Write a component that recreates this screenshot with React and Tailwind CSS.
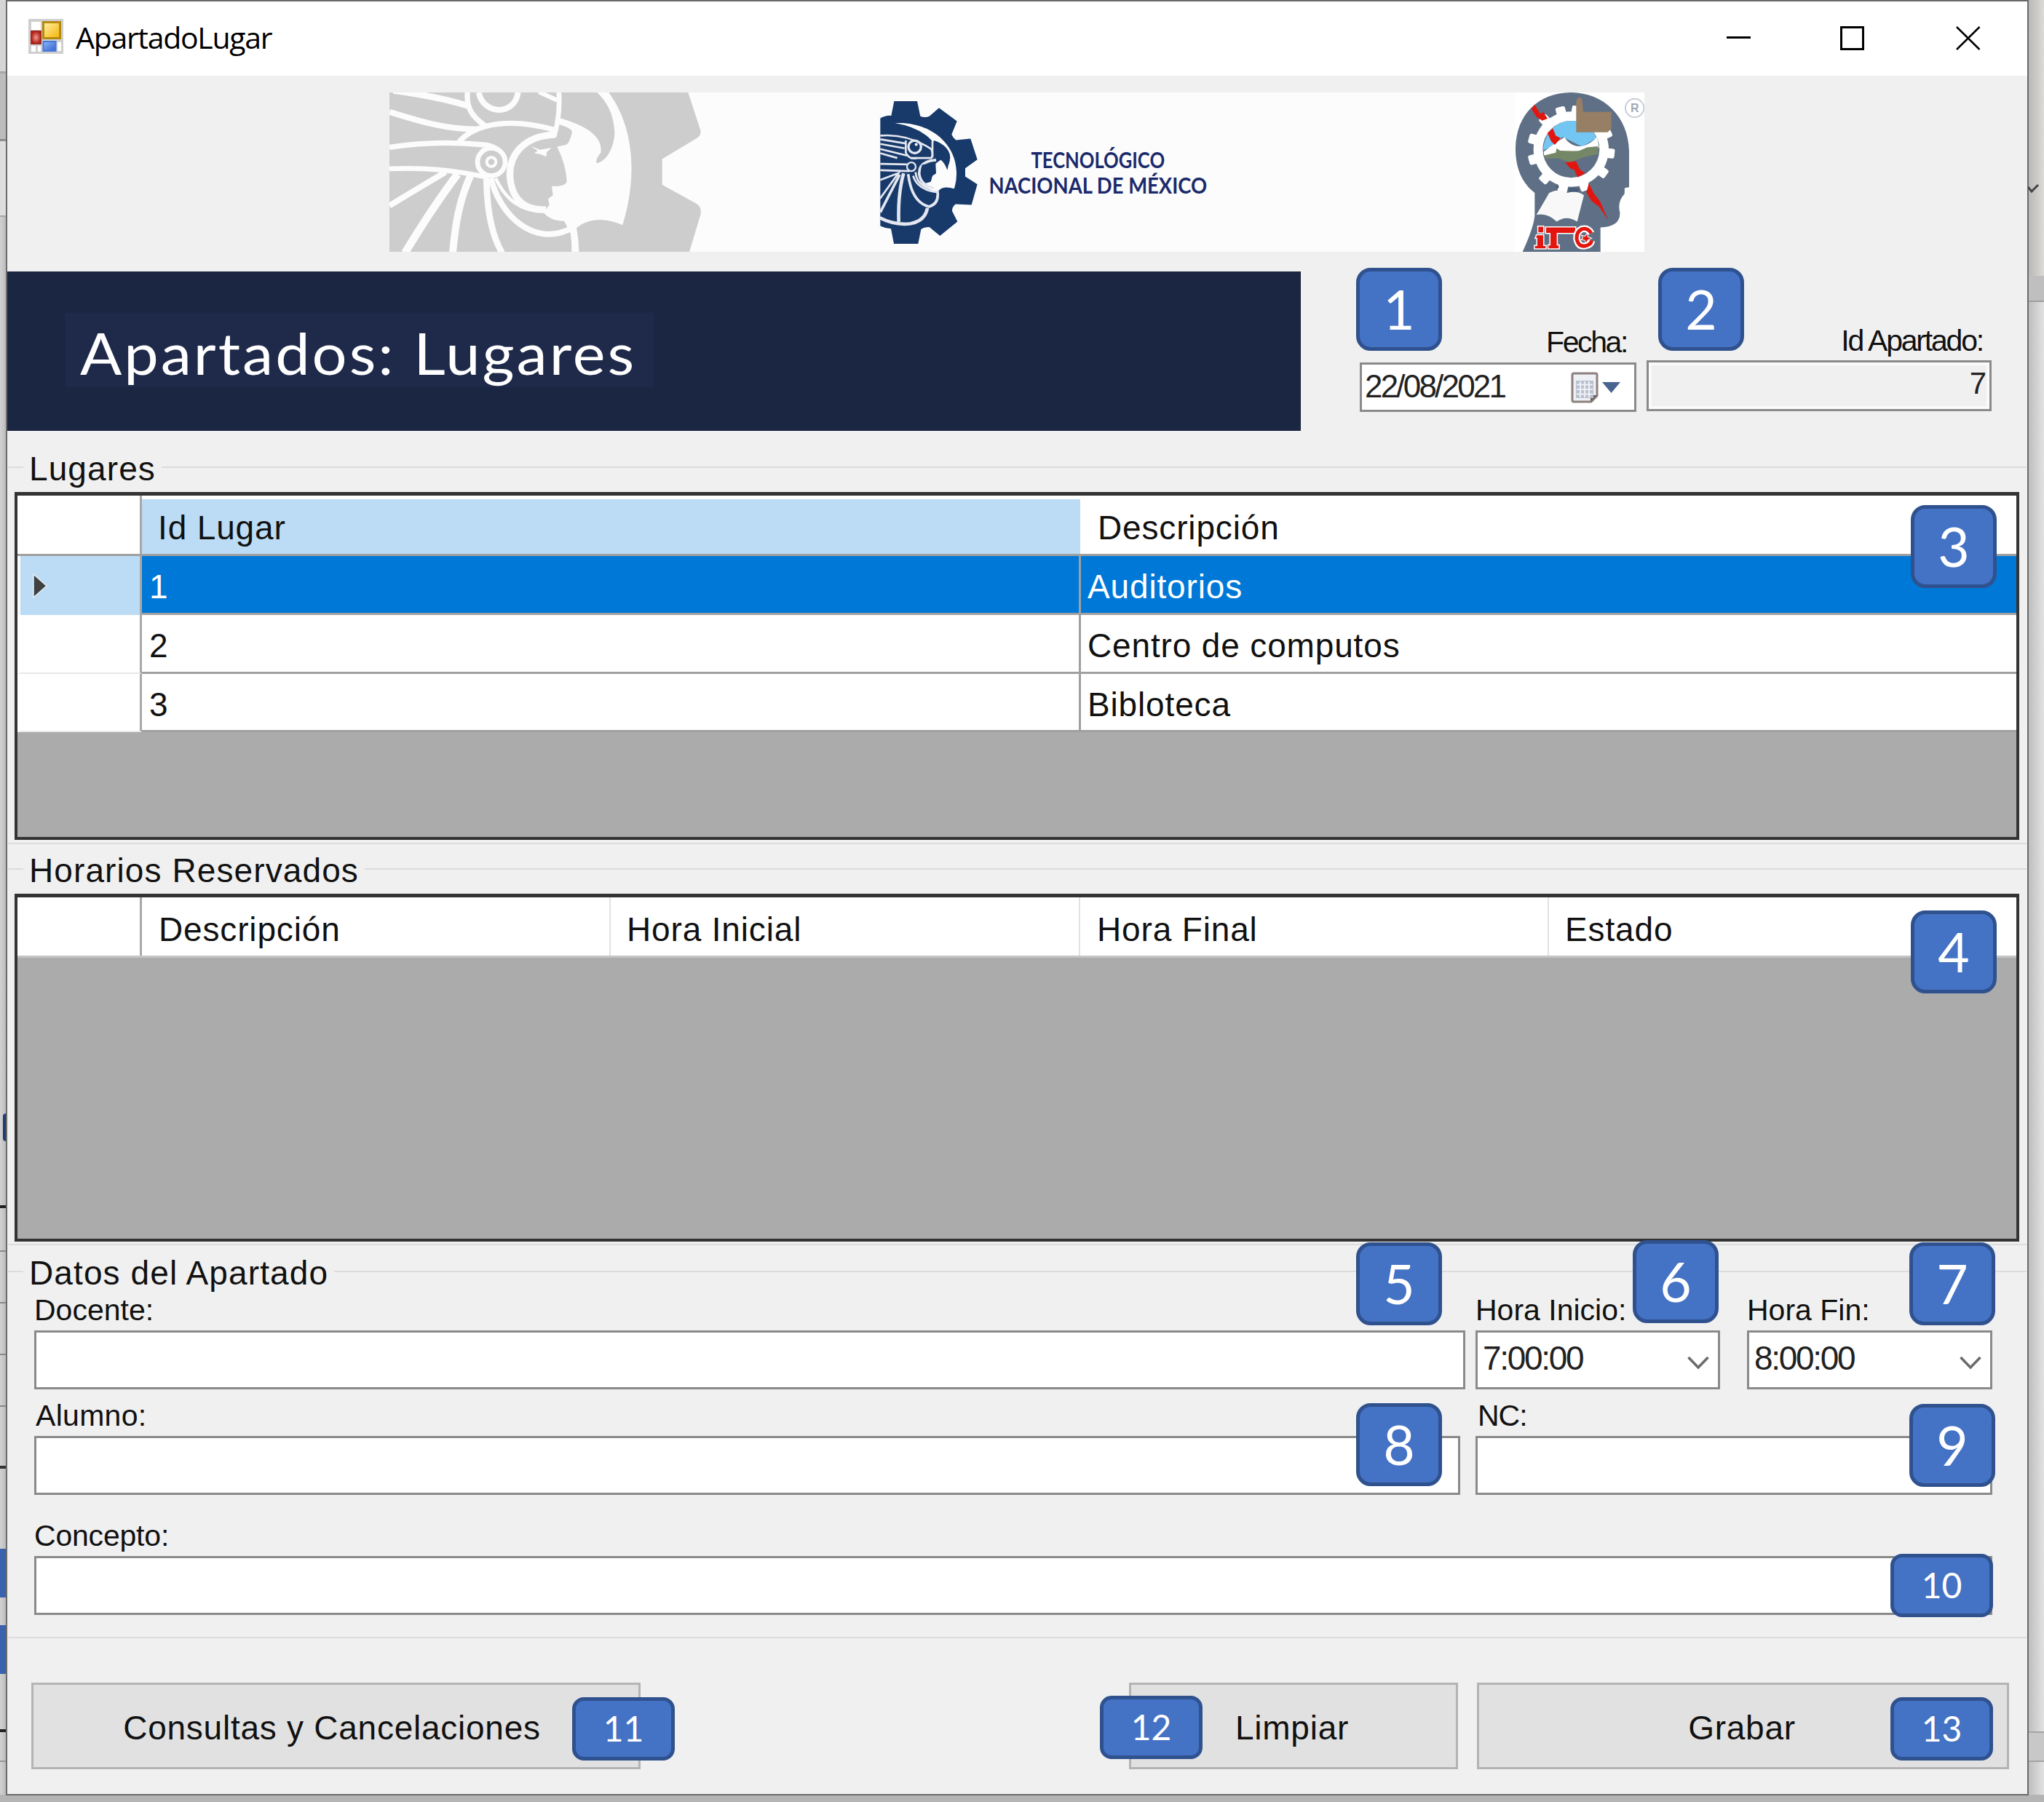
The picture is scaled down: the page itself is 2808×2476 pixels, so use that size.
import React from "react";

const TITLE_FONT = "font-['Open_Sans',sans-serif]";

function EagleWatermark() {
  return (
    <svg className="h-[219px] w-[432px] shrink-0" viewBox="44 52 1296 656" preserveAspectRatio="none">
      <path fill="#cdcdcd" d="M44 52H1275L1326 208Q1330 230 1310 241L1168 326V432L1310 510Q1332 524 1326 556L1280 708H44Z" />
      <path fill="#fcfcfc" d="M735 275L772 268Q786 262 797 215Q795 198 738 182L750 158C850 188 925 230 915 300Q888 335 900 343C950 330 972 260 972 215C968 140 940 90 900 52H948C1055 200 1065 400 1005 598C940 570 870 565 815 610Q825 660 825 708H795Q795 660 790 632L765 582Q710 582 680 548L703 514L698 490L718 475L713 438Q770 440 775 418Q772 350 735 275Z" />
      <g fill="none" stroke="#fcfcfc" strokeWidth="24">
        <path d="M60 44Q240 68 365 106" strokeWidth="26" />
        <path d="M44 132C150 165 270 204 410 204" />
        <path d="M366 52C360 110 380 150 440 190" strokeWidth="22" />
        <path d="M412 52C430 145 560 150 574 52" />
        <path d="M742 52C748 120 738 180 722 236" strokeWidth="20" />
        <path d="M660 50L735 84" strokeWidth="18" />
        <path d="M325 262C400 170 560 160 720 205" strokeWidth="22" />
        <path d="M44 278C180 256 320 256 440 268Q505 280 520 330" strokeWidth="22" />
        <path d="M44 366C190 360 300 370 450 402" strokeWidth="20" />
        <path d="M725 226C600 230 530 310 542 410C552 500 610 540 690 534" strokeWidth="28" />
        <circle cx="464" cy="338" r="57" strokeWidth="20" fill="#cdcdcd" />
        <circle cx="464" cy="338" r="19" strokeWidth="12" />
        <path d="M275 380Q190 430 44 518" />
        <path d="M325 388C240 500 170 610 108 712" strokeWidth="32" />
        <path d="M378 395C330 500 315 600 305 712" strokeWidth="30" />
        <path d="M444 405C445 520 460 630 508 712" strokeWidth="26" />
        <path d="M462 405C500 560 640 690 792 612" />
        <path d="M482 405C520 490 590 550 690 538" strokeWidth="14" />
      </g>
      <path fill="#fcfcfc" d="M625 272L665 288L712 280L692 298L690 316L665 306L640 302L655 292Z" />
    </svg>
  );
}

function TecnmEmblem() {
  return (
    <svg className="h-[219px] w-[140px] shrink-0" viewBox="80 52 420 656" preserveAspectRatio="none">
      <path
        fill="#173a6b"
        d="M90 158Q115 145 135 148L147 88H242L255 150Q275 158 292 150L332 116L406 170L384 225Q390 240 402 248L462 242L490 328L440 364V398L490 430L466 515L400 512Q385 525 386 540L408 584L336 642L292 606Q275 605 258 615L246 675H146L134 613Q110 612 90 602Z"
      />
      <path fill="#fcfcfc" d="M150 178C280 170 400 250 404 380Q405 420 394 448Q350 435 332 455L325 465Q280 450 262 430L298 420L305 395L320 385L318 345L345 325L372 348Q390 300 350 270L300 248Q250 195 150 178Z" />
      <path fill="#173a6b" d="M312 250Q372 270 378 320L366 372Q350 325 318 320Q305 290 312 250Z" />
      <g fill="none" stroke="#e4e7f0" strokeWidth="8">
        <path d="M90 230Q200 220 300 285Q310 310 300 322H215" />
        <path d="M90 245L195 262M90 264L190 282M90 285L200 312M90 302L160 322M90 346L200 348M90 372L210 376" />
        <path d="M305 250V320M195 250V300Q210 330 240 322" />
        <circle cx="232" cy="276" r="26" strokeWidth="10" />
        <circle cx="218" cy="358" r="18" strokeWidth="7" />
        <path d="M320 330Q250 335 250 385Q255 435 310 445" strokeWidth="11" />
        <path d="M90 412L165 384L88 490" />
        <path d="M170 390L90 545" strokeWidth="11" />
        <path d="M186 385Q162 470 166 585" strokeWidth="14" />
        <path d="M205 388C215 470 245 510 290 522Q335 510 325 455" strokeWidth="11" />
        <path d="M225 395Q245 455 325 462" />
        <path d="M235 380Q240 430 290 448" />
        <path d="M88 568Q150 600 215 592Q275 580 284 528" strokeWidth="14" />
      </g>
      <path fill="#173a6b" d="M262 350L290 345L300 338L302 358L318 378L305 388L298 418L270 410Q250 385 262 350Z" />
      <circle cx="232" cy="276" r="15" fill="#173a6b" />
      <circle cx="238" cy="266" r="6" fill="#fcfcfc" />
    </svg>
  );
}

const GEAR_TEETH = [8, 38, 66, 96, 126, 160, 192, 222, 255, 285, 318, 345];

function ItcLogo() {
  return (
    <svg className="h-[219px] w-[178px] shrink-0 bg-white" viewBox="123 52 534 656" preserveAspectRatio="none">
      <path
        fill="#5f7086"
        d="M155 708Q200 610 205 560V465C145 420 125 350 126 280C130 140 220 54 355 52C490 54 590 150 594 290V442L576 445L575 470Q545 500 556 545Q560 605 476 608V708Z"
      />
      <g fill="#fff">
        {GEAR_TEETH.map((angle) => (
          <rect key={angle} x="335" y="106" width="40" height="50" rx="8" transform={`rotate(${angle} 355 286)`} />
        ))}
        <circle cx="355" cy="286" r="155" />
      </g>
      <circle cx="355" cy="286" r="117" fill="#5f7086" />
      <path fill="#74c6f2" d="M240 290C245 220 290 169 355 169C410 169 445 200 460 240L400 275L320 235L275 275Z" />
      <path fill="#fff" d="M242 296L290 260L328 236Q350 275 400 274Q440 262 462 235L470 280L400 292L300 300L244 312Z" />
      <path fill="#748867" d="M244 312L292 300L295 282L310 292L385 294L420 278L466 274L467 305L410 318L350 340L300 322L250 325Z" />
      <path fill="#967f65" d="M376 85L388 72L400 78L405 132H521V202L505 216H376Z" />
      <g fill="#e2160e">
        <path d="M192 120L205 102L228 140L240 132L258 160L236 168L212 152Z" />
        <path d="M258 218L280 200L292 230L312 240L288 268L272 252Z" />
        <path d="M330 340L375 335L392 370L413 384L382 402L368 370L352 365Z" />
        <path d="M428 426L450 470L474 500L508 578L470 522L440 500L418 464Z" />
      </g>
      <path fill="#f8f8f8" d="M265 465Q310 445 340 465Q380 455 408 475L380 584Q335 555 296 584Q255 545 212 556Z" />
      <path fill="#4a5c78" d="M342 448Q365 440 388 450L382 460H345ZM290 438Q300 432 306 440L300 448Z" />
      <g fill="#e2160e" stroke="#fff" strokeWidth="9" paintOrder="stroke">
        <path d="M220 605H240V628H220ZM214 640H240V684H250V694H206V684H216V650H210ZM252 608H372V630H296V682H304V694H262V682H270V630H252Z" />
      </g>
      <g fill="none" stroke="#fff" strokeWidth="28">
        <path d="M438 632Q425 608 400 614Q376 625 378 655Q385 688 412 684Q436 680 440 662" />
      </g>
      <path d="M438 632Q425 608 400 614Q376 625 378 655Q385 688 412 684Q436 680 440 662" fill="none" stroke="#e2160e" strokeWidth="15" />
      <path fill="#e2160e" stroke="#fff" strokeWidth="3" d="M398 640L412 644L422 630L424 646L440 652L424 660L418 672L410 660L396 658L404 650Z" />
      <circle cx="617" cy="116" r="38" fill="none" stroke="#c9cdd8" strokeWidth="6" />
      <text x="617" y="133" textAnchor="middle" fontSize="48" fontWeight="700" fill="#a0a8b8" fontFamily="Liberation Sans">R</text>
    </svg>
  );
}

function FormIcon() {
  return (
    <svg className="h-[48px] w-[48px] shrink-0" viewBox="0 0 48 48">
      <defs>
        <linearGradient id="gold" x1="0" y1="0" x2="1" y2="1">
          <stop offset="0" stopColor="#fff0b0" /><stop offset="1" stopColor="#f5b400" />
        </linearGradient>
        <linearGradient id="azure" x1="0" y1="0" x2="1" y2="1">
          <stop offset="0" stopColor="#8fb8f8" /><stop offset="1" stopColor="#2f62d0" />
        </linearGradient>
        <radialGradient id="ruby">
          <stop offset="0" stopColor="#f09a90" /><stop offset="1" stopColor="#b3221a" />
        </radialGradient>
      </defs>
      <rect width="48" height="48" fill="#cfcfcf" />
      <path fill="#fff" d="M4 4H17V15H4ZM4 37H10V45H4ZM13 37H17V45H13ZM40 32H45V44H40Z" />
      <rect x="20.500" y="4.500" width="23" height="22" fill="url(#gold)" stroke="#b78a0c" strokeWidth="3" />
      <rect x="4" y="17" width="13" height="17" fill="url(#ruby)" stroke="#a3261e" strokeWidth="2" />
      <rect x="20.500" y="31" width="17" height="13" fill="url(#azure)" stroke="#4878d8" strokeWidth="2" />
    </svg>
  );
}

function TitleBar() {
  return (
    <header className="flex h-[102px] shrink-0 items-start bg-white pt-[24px] pl-[29px]">
      <FormIcon />
      <h1 className={`${TITLE_FONT} mt-[5px] ml-[17px] w-[2258px] shrink-0 text-[41px] leading-none tracking-[-1.3px] text-black`}>ApartadoLugar</h1>
      <svg className="mt-[10px] h-[33px] w-[370px] shrink-0" viewBox="0 0 370 33" fill="none" stroke="#000">
        <path d="M10 15.500H43" strokeWidth="3" />
        <path d="M167.500 1.500H197.500V31.500H167.500Z" strokeWidth="3" />
        <path d="M326 1L357.500 32M357.500 1L326 32" strokeWidth="2.500" />
      </svg>
    </header>
  );
}

function Banner() {
  return (
    <div className="mt-[23px] ml-[525px] flex h-[219px] w-[1724px] shrink-0 bg-[#fcfcfc]">
      <EagleWatermark />
      <div className="ml-[239px] flex">
        <TecnmEmblem />
        <div className="mt-[75px] ml-[15px] flex w-[295px] flex-col items-center font-['Lato',sans-serif] text-[31px] leading-[35px] font-bold whitespace-nowrap text-[#1b2a6b]">
          <p className="scale-x-[0.825]">TECNOLÓGICO</p>
          <p className="scale-x-[0.885]">NACIONAL DE MÉXICO</p>
        </div>
      </div>
      <div className="ml-auto flex">
        <ItcLogo />
      </div>
    </div>
  );
}

function CalendarIcon() {
  return (
    <svg className="h-[44px] w-[70px]" viewBox="0 0 70 44">
      <path d="M2 4Q2 2 4 2H34Q36 2 36 4V33L28 41H4Q2 41 2 39Z" fill="#eef0f5" stroke="#8d817f" strokeWidth="3" />
      <path d="M36 32L27 41V35Q27 32 30 32Z" fill="#6b5f5e" />
      <rect x="7" y="12" width="24" height="24" fill="#b9c0d0" />
      <path d="M8 17.500H30M8 24H30M8 30.500H30M13 13V35M19 13V35M25 13V35" stroke="#eef0f5" strokeWidth="2" />
      <path d="M43 14H68L55.500 29Z" fill="#4a6490" />
    </svg>
  );
}

function HeaderRow() {
  return (
    <div className="mt-[27px] flex h-[219px] shrink-0">
      <div className="w-[1777px] bg-[#1b2642] pt-[57px] pl-[80px]">
        <div className="h-[102px] w-[808px] bg-[#1f2a4a] pt-[14px] pl-[20px]">
          <h2 className="origin-left scale-x-[1.06] font-['Lato',sans-serif] text-[80px] leading-none tracking-[2.800px] whitespace-nowrap text-white">Apartados: Lugares</h2>
        </div>
      </div>
      <div className="ml-[81px] w-[380px]">
        <p className="mt-[77px] pr-[13px] text-right text-[41px] leading-none tracking-[-2.400px]">Fecha:</p>
        <div className="mt-[7px] flex h-[68px] justify-between border-[3px] border-[#8a8a8a] bg-white pr-[17px] pl-[4px]">
          <span className="mt-[8px] text-[44px] leading-none tracking-[-2.800px] text-[#222]">22/08/2021</span>
          <span className="mt-[10px]"><CalendarIcon /></span>
        </div>
      </div>
      <div className="ml-[14px] w-[474px]">
        <p className="mt-[75px] pr-[12px] text-right text-[41px] leading-none tracking-[-2.200px]">Id Apartado:</p>
        <div className="mt-[6px] h-[70px] border-[3px] border-[#8a8a8a] bg-[#f0f0f0] pt-[8px] pr-[4px] text-right text-[42px] leading-none text-[#222] shadow-[inset_0_0_0_4px_#fafafa]">7</div>
      </div>
    </div>
  );
}

function Group({ title, className, children }) {
  return (
    <section className={`mx-[1px] flex shrink-0 flex-col border-b-2 border-[#dcdcdc] ${className}`}>
      <div className="flex h-[46px] shrink-0">
        <span className="mt-[21px] h-[2px] w-[21px] bg-[#dcdcdc]" />
        <h3 className="mx-[7px] mt-[1px] px-[1px] text-[46px] leading-none tracking-[1.100px] whitespace-nowrap">{title}</h3>
        <span className="mt-[21px] h-[2px] flex-1 bg-[#dcdcdc]" />
      </div>
      {children}
    </section>
  );
}

function HeadCell({ className, children }) {
  return <div className={`h-full pt-[21px] leading-none ${className}`}>{children}</div>;
}

const PLACES = [
  { id: 1, name: "Auditorios", selected: true },
  { id: 2, name: "Centro de computos" },
  { id: 3, name: "Bibloteca" },
];

function PlacesGrid() {
  return (
    <div className="mt-[10px] ml-[9px] h-[478px] w-[2754px] border-4 border-t-[5px] border-[#333] bg-[#ababab] text-[46px] tracking-[0.850px]">
      <div className="flex h-[83px] border-b-[3px] border-[#a0a0a0] bg-white">
        <div className="w-[171px] shrink-0 border-r-[3px] border-[#a8a8a8]" />
        <HeadCell className="mt-[5px] h-[75px]! w-[1289px] bg-[#bbdcf4] pt-[16px]! pl-[22px]">Id Lugar</HeadCell>
        <HeadCell className="pl-[24px]">Descripción</HeadCell>
      </div>
      {PLACES.map((p) => (
        <div key={p.id} className={p.selected ? "flex h-[81px] bg-[#0078d7] text-white" : "flex h-[80.5px] bg-white"}>
          <div className={`flex w-[171px] shrink-0 items-center border-r-[3px] border-[#a8a8a8] border-l-4 pl-[17px] ${p.selected ? "border-l-[#fafafa] bg-[#bbdcf4]" : "border-b-2 border-b-[#e8e8e8] border-l-white bg-white"}`}>
            {p.selected && (
              <svg className="h-[34px] w-[20px]" viewBox="0 0 20 34">
                <path d="M1 1L19 17L1 33Z" fill="#404040" stroke="#e8f0f8" strokeWidth="1.500" />
              </svg>
            )}
          </div>
          <div className="w-[1290px] border-r-[3px] border-b-[3px] border-[#a0a0a0] pt-[19px] pl-[10px] leading-none">{p.id}</div>
          <div className="flex-1 border-b-[3px] border-[#a0a0a0] pt-[19px] pl-[9px] leading-none">{p.name}</div>
        </div>
      ))}
    </div>
  );
}

function ReservedGrid() {
  return (
    <div className="mt-[10px] ml-[9px] h-[478px] w-[2754px] border-4 border-t-[5px] border-[#333] bg-[#ababab] text-[46px] tracking-[0.850px]">
      <div className="flex h-[83px] border-b-[3px] border-[#c4c4c4] bg-white">
        <div className="w-[171px] shrink-0 border-r-[3px] border-[#a8a8a8]" />
        <HeadCell className="w-[644px] border-r-2 border-[#e2e2e2] pl-[23px]">Descripción</HeadCell>
        <HeadCell className="w-[645px] border-r-2 border-[#e2e2e2] pl-[22px]">Hora Inicial</HeadCell>
        <HeadCell className="w-[644px] border-r-2 border-[#e2e2e2] pl-[23px]">Hora Final</HeadCell>
        <HeadCell className="pl-[22px]">Estado</HeadCell>
      </div>
    </div>
  );
}

function Field({ label, className, labelClass = "", children }) {
  return (
    <label className={`block shrink-0 ${className}`}>
      <span className={`block h-[49px] pt-[1px] text-[41px] leading-none whitespace-nowrap ${labelClass}`}>{label}</span>
      <span className="flex h-[81px] items-start justify-between border-[3px] border-[#8a8a8a] bg-white">{children}</span>
    </label>
  );
}

function ComboValue({ value }) {
  return (
    <>
      <span className="mt-[12px] ml-[7px] text-[46px] leading-none tracking-[-2.300px] text-[#222]">{value}</span>
      <svg className="mt-[32px] mr-[12px] h-[19px] w-[30px]" viewBox="0 0 30 19" fill="none" stroke="#6a6a6a" strokeWidth="3.500">
        <path d="M1.500 2L15 16L28.500 2" />
      </svg>
    </>
  );
}

function BookingFields() {
  return (
    <>
      <div className="mt-[8px] flex">
        <Field label="Docente:" className="ml-[36px] w-[1966px]" />
        <Field label="Hora Inicio:" className="ml-[14px] w-[336px]"><ComboValue value="7:00:00" /></Field>
        <Field label="Hora Fin:" className="ml-[37px] w-[337px]"><ComboValue value="8:00:00" /></Field>
      </div>
      <div className="mt-[15px] flex">
        <Field label="Alumno:" className="ml-[36px] w-[1959px]" labelClass="pl-[2px] tracking-[0.300px]" />
        <Field label="NC:" className="ml-[21px] w-[710px]" labelClass="pl-[3px] tracking-[-1px]" />
      </div>
      <div className="mt-[35px] flex">
        <Field label="Concepto:" className="ml-[36px] w-[2690px]" labelClass="tracking-[-0.200px]" />
      </div>
    </>
  );
}

function Button({ className, children }) {
  return (
    <button type="button" className={`h-[119px] border-[3px] border-[#b4b4b4] bg-[#e1e1e1] pt-[4px] text-[46px] leading-none tracking-[0.750px] whitespace-nowrap ${className}`}>
      {children}
    </button>
  );
}

const BADGES = [
  { n: 1, at: "left-[1863px] top-[368px]" },
  { n: 2, at: "left-[2278px] top-[368px]" },
  { n: 3, at: "left-[2625px] top-[694px]" },
  { n: 4, at: "left-[2625px] top-[1251px]" },
  { n: 5, at: "left-[1863px] top-[1707px]" },
  { n: 6, at: "left-[2243px] top-[1704px]" },
  { n: 7, at: "left-[2623px] top-[1707px]" },
  { n: 8, at: "left-[1863px] top-[1928px]" },
  { n: 9, at: "left-[2623px] top-[1929px]" },
  { n: 10, at: "left-[2597px] top-[2135px]" },
  { n: 11, at: "left-[786px] top-[2332px]" },
  { n: 12, at: "left-[1511px] top-[2330px]" },
  { n: 13, at: "left-[2597px] top-[2332px]" },
];

function Badge({ n, at }) {
  const size = n < 10
    ? "h-[114px] w-[118px] rounded-[20px] pb-[2px] text-[75px]"
    : "h-[87px] w-[141px] rounded-[16px] pb-[1px] text-[48px]";
  return (
    <div className={`absolute flex items-center justify-center border-[5px] border-[#2f528f] bg-[#4472c4] font-['Lato',sans-serif] leading-none text-white ${size} ${at}`}>
      {n}
    </div>
  );
}

const LEFT_EDGE_MARKS = [
  "top-[0px] h-[100px] bg-[#d6d5d3]",
  "top-[98px] h-[3px] bg-[#a8a7a5]",
  "top-[101px] h-[90px] bg-[#bdbcba]",
  "top-[191px] h-[3px] bg-[#8e8e8e]",
  "top-[194px] h-[102px] bg-[#dedede]",
  "top-[296px] h-[2px] bg-[#a8a8a8]",
  "top-[1656px] h-[4px] bg-[#222]",
  "top-[1718px] h-[2px] bg-[#8a8a8a]",
  "top-[1789px] h-[2px] bg-[#8a8a8a]",
  "top-[1860px] h-[2px] bg-[#8a8a8a]",
  "top-[1931px] h-[2px] bg-[#8a8a8a]",
  "top-[2014px] h-[4px] bg-[#333]",
  "top-[2128px] h-[67px] bg-[#3a62ad]",
  "top-[2233px] h-[67px] bg-[#3a62ad]",
  "top-[2376px] h-[4px] bg-[#222]",
  "top-[2419px] h-[2px] bg-[#999]",
];

function Backdrop() {
  return (
    <>
      <div className="absolute top-0 left-0 h-[2px] w-full bg-[#9a9a9a]" />
      <div className="absolute top-0 left-0 h-full w-[8px] bg-linear-to-r from-[#d2d2d2] to-[#bcbcbc]" />
      {LEFT_EDGE_MARKS.map((m) => (
        <div key={m} className={`absolute left-0 w-[8px] ${m}`} />
      ))}
      <div className="absolute top-[1530px] left-[4px] h-[38px] w-[8px] rounded-l-[4px] bg-[#1f3d70]" />
      <div className="absolute top-0 right-0 h-full w-[22px] bg-linear-to-r from-[#bdbdbd] to-[#e2e2e2]" />
      <div className="absolute top-0 right-0 h-[380px] w-[22px] bg-linear-to-r from-[#b8b7b6] to-[#dddbd8]" />
      <div className="absolute top-[379px] right-0 h-[36px] w-[22px] border-b-2 border-[#a0a0a0] bg-[#bfbfbf]" />
      <div className="absolute top-[2379px] right-0 h-[42px] w-[22px] border-y-2 border-[#a4a4a4] bg-[#c8c8c8]" />
      <div className="absolute bottom-0 left-0 h-[10px] w-full bg-[#b4b4b4]" />
    </>
  );
}

export default function App() {
  return (
    <div className="relative h-[2476px] w-[2808px] overflow-hidden bg-[#c4c4c4] font-['Liberation_Sans',sans-serif] text-[#111]">
      <Backdrop />
      <main className="relative ml-[8px] flex h-[2467px] w-[2779px] flex-col border-2 border-[#6a6a6a] bg-[#f0f0f0]">
        <TitleBar />
        <Banner />
        <HeaderRow />
        <Group title="Lugares" className="mt-[28px] h-[540px]"><PlacesGrid /></Group>
        <Group title="Horarios Reservados" className="mt-[12px] h-[539px]"><ReservedGrid /></Group>
        <Group title="Datos del Apartado" className="mt-[14px] h-[526px]"><BookingFields /></Group>
        <footer className="mt-[61px] flex shrink-0 pl-[33px]">
          <Button className="w-[837px] pr-[11px]">Consultas y Cancelaciones</Button>
          <Button className="ml-[671px] w-[452px] pr-[4px]">Limpiar</Button>
          <Button className="ml-[26px] w-[731px] pr-[3px]">Grabar</Button>
        </footer>
      </main>
      <svg className="absolute top-[252px] left-[2786px] h-[14px] w-[16px]" viewBox="0 0 16 14" fill="none" stroke="#444" strokeWidth="3">
        <path d="M0 5L5 11L14 2" />
      </svg>
      {BADGES.map((b) => (
        <Badge key={b.n} {...b} />
      ))}
    </div>
  );
}
